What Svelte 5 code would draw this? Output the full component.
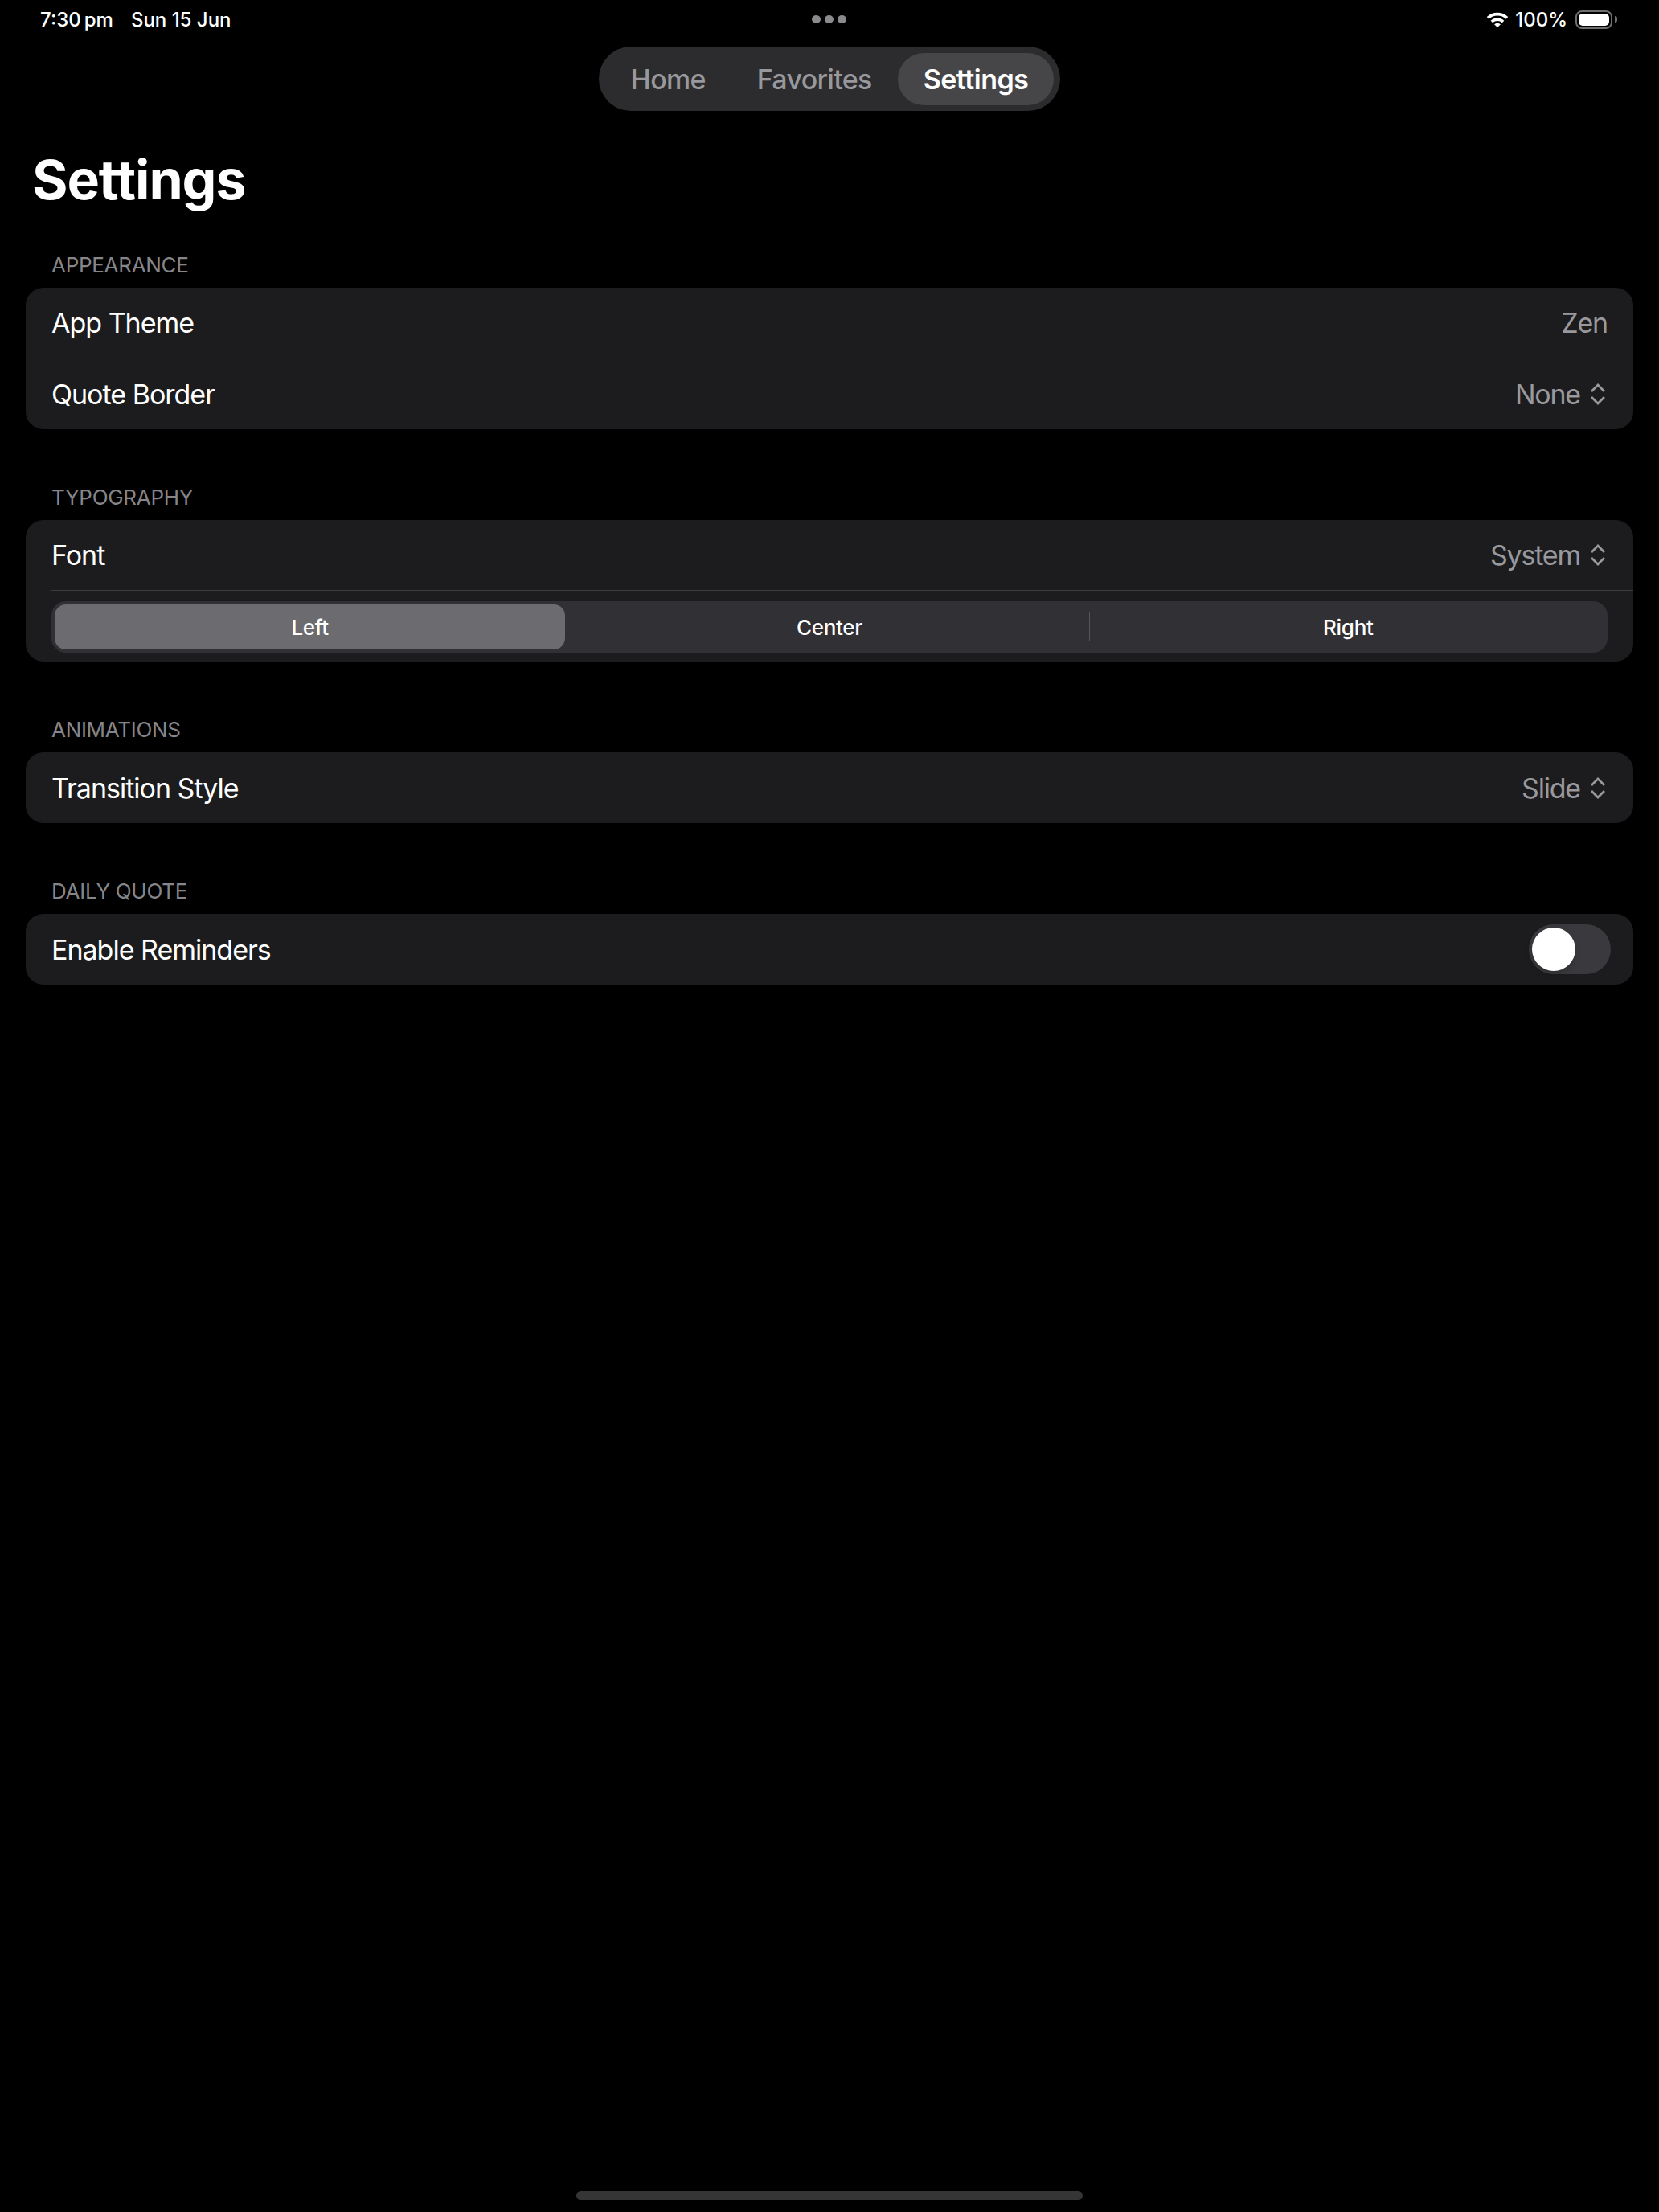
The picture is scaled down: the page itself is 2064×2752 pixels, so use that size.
<script>
	const tabs = ['Home', 'Favorites', 'Settings'];
	const aligns = ['Left', 'Center', 'Right'];
</script>

{#snippet updown()}
	<svg class="updown" viewBox="0 0 20 27" width="20" height="27" fill="none">
		<path d="M2 10 L10 2 L18 10 M2 17 L10 25 L18 17" />
	</svg>
{/snippet}

<div class="screen">
	<div class="status">
		<div class="status-left">
			<span class="time">7:30<span class="pm">pm</span></span>
			<span>Sun 15 Jun</span>
		</div>
		<div class="dots"><i></i><i></i><i></i></div>
		<div class="status-right">
			<svg class="wifi" viewBox="0 0 28 19" width="28" height="19">
				<g fill="none" stroke="#fff" stroke-width="3.6">
					<path d="M2 7.4 A17.5 17.5 0 0 1 26 7.4" />
					<path d="M6.9 12 A10.4 10.4 0 0 1 21.1 12" />
				</g>
				<path d="M10 15.2 A6 6 0 0 1 18 15.2 L14 19 Z" fill="#fff" />
			</svg>
			<span>100%</span>
			<div class="battery"><div class="fill"></div></div>
			<div class="nub"></div>
		</div>
	</div>

	<nav class="tabs">
		{#each tabs as tab}
			<div class="tab" class:active={tab === 'Settings'}>{tab}</div>
		{/each}
	</nav>

	<h1>Settings</h1>

	<section class="first">
		<h2>APPEARANCE</h2>
		<div class="card">
			<div class="row line">
				<span>App Theme</span>
				<span class="value">Zen</span>
			</div>
			<div class="row">
				<span>Quote Border</span>
				<span class="value">None {@render updown()}</span>
			</div>
		</div>
	</section>

	<section>
		<h2>TYPOGRAPHY</h2>
		<div class="card">
			<div class="row line">
				<span>Font</span>
				<span class="value">System {@render updown()}</span>
			</div>
			<div class="segmented">
				{#each aligns as a}
					<div class="seg" class:on={a === 'Left'} class:sep={a === 'Right'}>{a}</div>
				{/each}
			</div>
		</div>
	</section>

	<section>
		<h2>ANIMATIONS</h2>
		<div class="card">
			<div class="row">
				<span>Transition Style</span>
				<span class="value">Slide {@render updown()}</span>
			</div>
		</div>
	</section>

	<section>
		<h2>DAILY QUOTE</h2>
		<div class="card">
			<div class="row toggle-row">
				<span>Enable Reminders</span>
				<div class="toggle"><div class="knob"></div></div>
			</div>
		</div>
	</section>

	<div class="home-bar"></div>
</div>

<style>
	:global(body) {
		background: #000;
	}

	.screen {
		display: flex;
		flex-direction: column;
		height: 2752px;
		box-sizing: border-box;
		padding: 0 32px;
		background: #000;
		color: #fff;
		font-family: Inter, 'Liberation Sans', sans-serif;
		font-size: 34px;
		letter-spacing: -1px;
	}

	.status {
		display: grid;
		grid-template-columns: 1fr auto 1fr;
		align-items: center;
		height: 48px;
		margin: 0 -32px 10px;
		padding: 0 52px 0 50px;
		font-size: 24px;
		font-weight: 500;
		letter-spacing: 0;
	}

	.status-left {
		display: flex;
		gap: 22px;
	}

	.pm {
		margin-left: 4px;
	}

	.dots {
		display: flex;
		gap: 5px;
	}

	.dots i {
		width: 11px;
		height: 10px;
		border-radius: 50%;
		background: #8a8a8c;
	}

	.status-right {
		display: flex;
		align-items: center;
		justify-content: flex-end;
	}

	.wifi {
		margin-right: 8px;
	}

	.battery {
		box-sizing: border-box;
		width: 46px;
		height: 23px;
		margin-left: 10px;
		padding: 2px;
		border: 2px solid #6e6e70;
		border-radius: 8px;
	}

	.fill {
		height: 100%;
		border-radius: 5px;
		background: #fff;
	}

	.nub {
		width: 3px;
		height: 8px;
		margin-left: 3px;
		border-radius: 0 3px 3px 0;
		background: #6e6e70;
	}

	.tabs {
		display: flex;
		align-self: center;
		box-sizing: border-box;
		height: 80px;
		padding: 8px 8px 7px;
		border-radius: 40px;
		background: #2c2c2e;
	}

	.tab {
		display: flex;
		align-items: center;
		padding: 0 32px;
		border-radius: 33px;
		color: #98989d;
		font-weight: 500;
		letter-spacing: -0.7px;
	}

	.tab.active {
		background: #464649;
		color: #fff;
		font-weight: 600;
		letter-spacing: -0.5px;
	}

	h1 {
		height: 82px;
		margin: 44px 0 50px;
		padding-left: 8px;
		font-size: 68px;
		font-weight: 700;
		line-height: 82px;
		letter-spacing: -1.1px;
	}

	section {
		margin-top: 69px;
	}

	section.first {
		margin-top: 0;
	}

	h2 {
		height: 32px;
		margin: 0 0 12px;
		padding-left: 32px;
		color: #86868a;
		font-size: 26px;
		font-weight: 400;
		line-height: 32px;
		letter-spacing: -0.3px;
	}

	.card {
		display: flow-root;
		border-radius: 22px;
		background: #1c1c1e;
	}

	.row {
		display: flex;
		align-items: center;
		justify-content: space-between;
		box-sizing: border-box;
		height: 88px;
		margin-left: 32px;
		padding-right: 32px;
	}

	.row.line {
		border-bottom: 1px solid #3c3c3f;
	}

	.value {
		display: flex;
		align-items: center;
		gap: 12px;
		color: #98989d;
		letter-spacing: -1.2px;
	}

	.updown {
		margin-right: 2px;
	}

	.updown path {
		stroke: #98989d;
		stroke-width: 2.8;
	}

	.segmented {
		display: grid;
		grid-template-columns: repeat(3, 1fr);
		height: 64px;
		margin: 13px 32px 11px;
		border-radius: 18px;
		background: #313135;
		font-size: 26px;
		font-weight: 500;
		letter-spacing: -0.3px;
	}

	.seg {
		position: relative;
		display: flex;
		align-items: center;
		justify-content: center;
	}

	.seg.on {
		margin: 4px 6px 4px 4px;
		border-radius: 14px;
		background: #6c6c70;
	}

	.seg.sep::before {
		content: '';
		position: absolute;
		left: 0;
		top: 14px;
		bottom: 15px;
		width: 1px;
		background: #55555a;
	}

	.toggle-row {
		padding-right: 28px;
	}

	.toggle {
		box-sizing: border-box;
		width: 102px;
		height: 62px;
		padding: 4px;
		border-radius: 31px;
		background: #3a3a3e;
	}

	.knob {
		width: 54px;
		height: 54px;
		border-radius: 50%;
		background: #fff;
		box-shadow: 0 3px 8px rgba(0, 0, 0, 0.2);
	}

	.home-bar {
		align-self: center;
		width: 630px;
		height: 11px;
		margin-top: auto;
		margin-bottom: 15px;
		border-radius: 6px;
		background: #353535;
	}
</style>
